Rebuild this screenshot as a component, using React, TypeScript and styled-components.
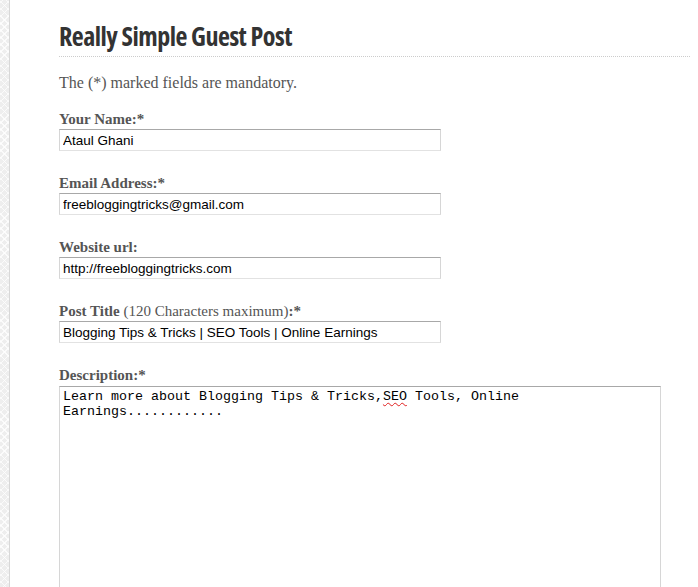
import React from "react";
import styled, { createGlobalStyle } from "styled-components";

const GlobalStyle = createGlobalStyle`
  html, body { margin: 0; padding: 0; background: #fff; }
  body { font-family: "Liberation Serif", serif; }
`;

const Page = styled.div`
  display: flex;
  min-height: 100vh;
  background: #fff;
`;

const Strip = styled.div`
  width: 9px;
  flex: none;
  border-right: 1px solid #d8d8d8;
  background-color: #eeeeee;
  background-image:
    repeating-linear-gradient(45deg, rgba(255,255,255,0.75) 0 1px, transparent 1px 5px),
    repeating-linear-gradient(-45deg, rgba(255,255,255,0.75) 0 1px, transparent 1px 5px);
`;

const Main = styled.main`
  flex: 1;
  padding: 0 8px 0 49px;
`;

const Heading = styled.h1`
  margin: 0 0 16px;
  padding: 20px 0 4px;
  border-bottom: 1px dotted #cccccc;
  font-family: "Open Sans", sans-serif;
  font-weight: 700;
  font-size: 26px;
  line-height: 32px;
  color: #333;
  letter-spacing: -0.5px;
  font-stretch: 75%;
`;

const Intro = styled.p`
  margin: 0 0 17px;
  font-family: "Liberation Serif", serif;
  font-size: 16px;
  line-height: 20px;
  color: #555;
`;

const Field = styled.div`
  display: flex;
  flex-direction: column;
  margin-bottom: 23px;
`;

const Label = styled.label`
  font-family: "Liberation Serif", serif;
  font-weight: 700;
  font-size: 15px;
  line-height: 18px;
  color: #555;
`;

const Note = styled.span`
  font-weight: 400;
`;

const TextInput = styled.input`
  box-sizing: border-box;
  margin-top: 1px;
  width: 382px;
  height: 22px;
  padding: 0 3px;
  border: 1px solid #d6d6d6;
  border-top-color: #a8a8a8;
  border-bottom-color: #e2e2e2;
  background: #fff;
  font-family: "Liberation Sans", Arial, sans-serif;
  font-size: 13.5px;
  line-height: 20px;
  color: #000;
  outline: none;
`;

const TextBox = styled.div`
  box-sizing: border-box;
  margin-top: 2px;
  width: 602px;
  height: 201px;
  padding: 2px 3px;
  border: 1px solid #d6d6d6;
  border-top-color: #a8a8a8;
  border-bottom: none;
  background: #fff;
  font-family: "Liberation Mono", "Courier New", monospace;
  font-size: 13.33px;
  line-height: 15px;
  color: #000;
  white-space: pre-wrap;
  word-wrap: break-word;
`;

const Misspelled = styled.span`
  text-decoration: underline wavy #e02020;
  text-decoration-skip-ink: none;
  text-underline-offset: 2px;
  text-decoration-thickness: 1px;
`;

const fields = [
  { id: "name", label: "Your Name:*", value: "Ataul Ghani" },
  { id: "email", label: "Email Address:*", value: "freebloggingtricks@gmail.com" },
  { id: "url", label: "Website url:", value: "http://freebloggingtricks.com" },
];

export default function App() {
  return (
    <>
      <GlobalStyle />
      <Page>
        <Strip />
        <Main>
          <Heading>Really Simple Guest Post</Heading>
          <Intro>The (*) marked fields are mandatory.</Intro>
          {fields.map((f) => (
            <Field key={f.id}>
              <Label htmlFor={f.id}>{f.label}</Label>
              <TextInput id={f.id} defaultValue={f.value} />
            </Field>
          ))}
          <Field>
            <Label htmlFor="title">
              Post Title <Note>(120 Characters maximum)</Note>:*
            </Label>
            <TextInput id="title" defaultValue="Blogging Tips & Tricks | SEO Tools | Online Earnings" />
          </Field>
          <Field>
            <Label>Description:*</Label>
            <TextBox role="textbox">
              Learn more about Blogging Tips &amp; Tricks,<Misspelled>SEO</Misspelled> Tools, Online Earnings............
            </TextBox>
          </Field>
        </Main>
      </Page>
    </>
  );
}
